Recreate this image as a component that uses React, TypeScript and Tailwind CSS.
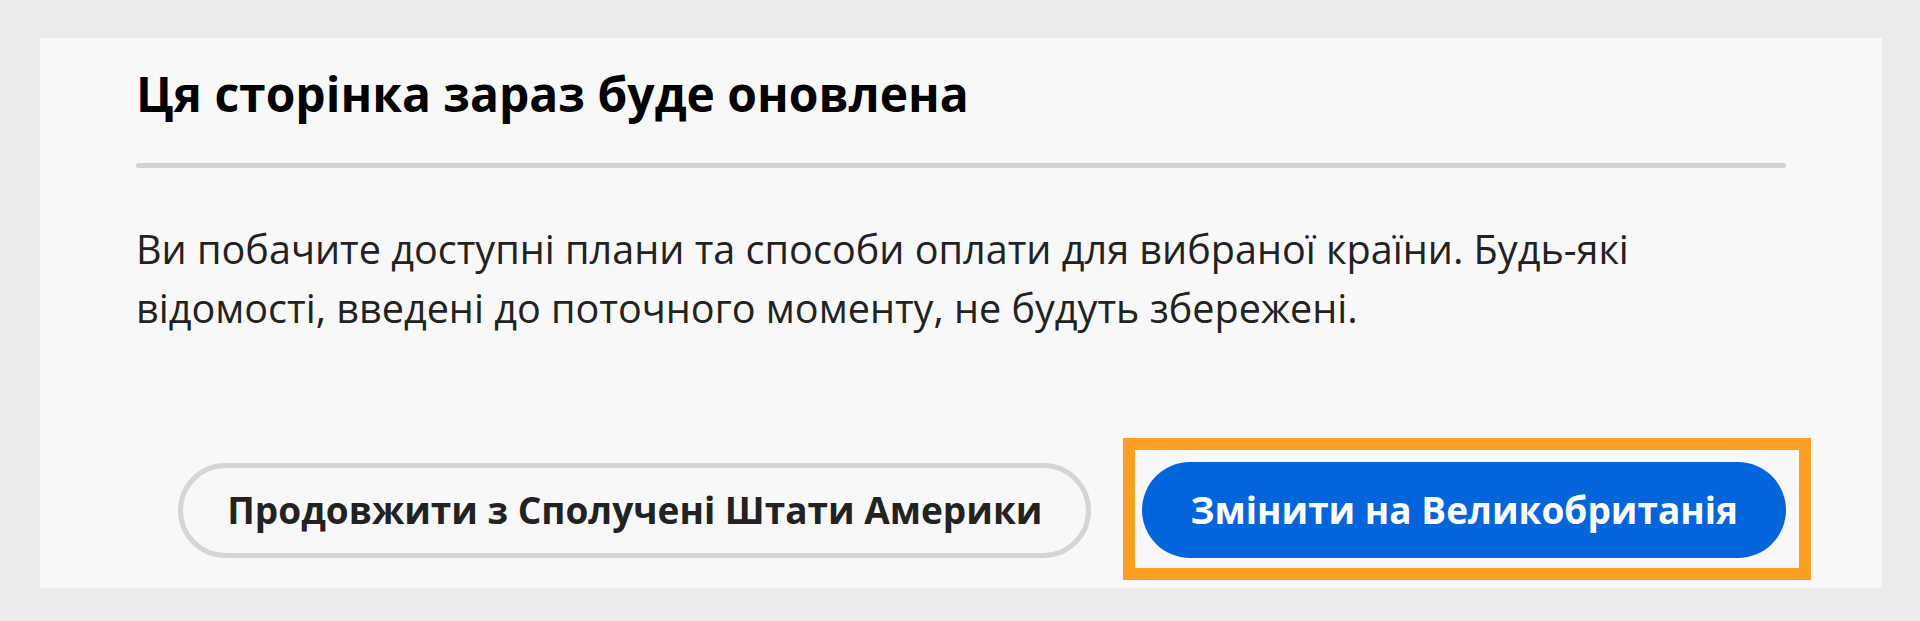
export default function App() {
  return (
    <div className="min-h-screen w-full bg-[#ebebeb] pl-[40px] pr-[38px] pt-[38px] font-['Open_Sans',sans-serif]">
      <div className="flex h-[550px] flex-col bg-[#f8f8f8] px-[96px] pb-[30px] pt-[27px]">
        {/* Header */}
        <h2 className="text-[48px] font-bold leading-[58px] text-black">
          Ця сторінка зараз буде оновлена
        </h2>
        <div className="mt-[40px] h-[5px] w-full rounded-full bg-[#d3d3d3]" />

        {/* Body */}
        <p className="mt-[52px] text-[39.6px] leading-[59px] text-[#222222]">
          Ви побачите доступні плани та способи оплати для вибраної країни. Будь-які
          <br />
          відомості, введені до поточного моменту, не будуть збережені.
        </p>

        {/* Actions */}
        <div className="mt-auto flex items-center justify-end gap-[51px]">
          <button className="h-[95px] rounded-full border-[5px] border-[#d5d5d5] bg-[#f8f8f8] px-[44px] text-[37px] font-bold text-[#222222]">
            Продовжити з Сполучені Штати Америки
          </button>
          <div className="relative">
            <button className="h-[96px] rounded-full bg-[#0265dc] px-[48px] text-[37px] font-bold text-white">
              Змінити на Великобританія
            </button>
            {/* highlight outline */}
            <div className="pointer-events-none absolute -bottom-[22px] -left-[19px] -right-[25px] -top-[24px] border-[12px] border-[#fa9f24]" />
          </div>
        </div>
      </div>
    </div>
  );
}
